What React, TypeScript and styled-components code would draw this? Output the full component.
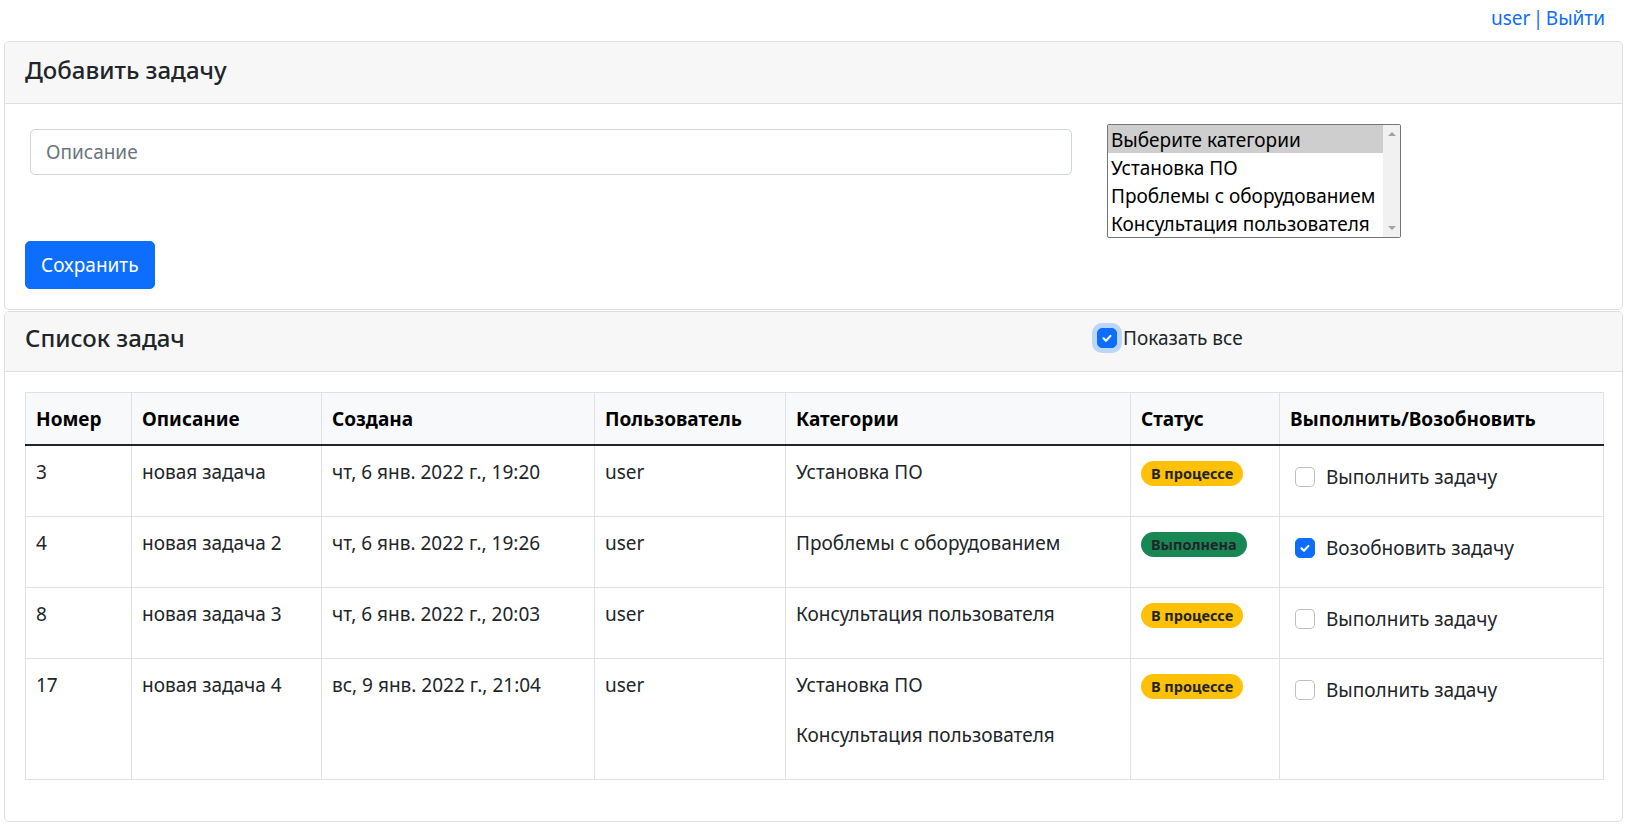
import React from "react";
import styled, { createGlobalStyle } from "styled-components";

const GlobalStyle = createGlobalStyle`
  html, body { margin: 0; padding: 0; background: #fff; }
  body {
    font-family: "Noto Sans", "Open Sans", sans-serif;
    font-size: 19px;
    line-height: 30px;
    color: #212529;
  }
  * { box-sizing: border-box; }
`;

const Page = styled.div`
  padding: 0 5px 0 4px;
`;

const TopBar = styled.div`
  height: 41px;
  display: flex;
  justify-content: flex-end;
  align-items: flex-start;
  gap: 2.5px;
  padding: 3px 18px 0 0;
  color: #0d6efd;
`;

const TopLink = styled.a`
  color: #0d6efd;
  text-decoration: none;
`;

const Card = styled.section<{ $gap?: number }>`
  border: 1px solid #dfdfdf;
  border-radius: 5px;
  background: #fff;
  margin-top: ${(p) => p.$gap ?? 0}px;
  overflow: hidden;
`;

const CardHeader = styled.div<{ $h: number; $lift: number }>`
  height: ${(p) => p.$h}px;
  display: flex;
  align-items: center;
  padding: 0 20px ${(p) => p.$lift}px 20px;
  background: #f7f7f7;
  border-bottom: 1px solid #dfdfdf;
`;

const Title = styled.h5`
  margin: 0;
  font-size: 24px;
  font-weight: 500;
  line-height: 30px;
  width: 1072px;
  flex: none;
`;

const CardBody = styled.div`
  padding: 20px;
`;

const FormRow = styled.div`
  display: flex;
  align-items: flex-start;
`;

const TextInput = styled.input`
  width: 1042px;
  height: 46px;
  margin: 5px 0 0 5px;
  padding: 0 15px;
  border: 1px solid #ced4da;
  border-radius: 5px;
  font: inherit;
  color: #212529;
  &::placeholder { color: #6c757d; }
`;

const ListBox = styled.div`
  margin-left: 35px;
  width: 294px;
  height: 114px;
  border: 1px solid #767676;
  border-radius: 2px;
  display: flex;
  background: #fff;
`;

const Options = styled.div`
  flex: 1;
  overflow: hidden;
`;

const Option = styled.div<{ $selected?: boolean }>`
  height: 28px;
  line-height: 30px;
  padding-left: 3px;
  white-space: nowrap;
  color: #000;
  background: ${(p) => (p.$selected ? "#cecece" : "transparent")};
`;

const ScrollTrack = styled.div`
  width: 17px;
  background: #f1f1f1;
  display: flex;
  flex-direction: column;
  justify-content: space-between;
  align-items: center;
  padding: 7px 0;
`;

const Arrow = styled.span<{ $down?: boolean }>`
  width: 0;
  height: 0;
  border-left: 4px solid transparent;
  border-right: 4px solid transparent;
  ${(p) =>
    p.$down
      ? "border-top: 4px solid #a3a3a3;"
      : "border-bottom: 4px solid #a3a3a3;"}
`;

const PrimaryButton = styled.button`
  margin-top: 3px;
  height: 48px;
  padding: 0 15px;
  border: 1px solid #0d6efd;
  border-radius: 5px;
  background: #0d6efd;
  color: #fff;
  font: inherit;
  cursor: pointer;
`;

const CheckLabel = styled.label<{ $gap?: number }>`
  display: flex;
  align-items: center;
  gap: ${(p) => p.$gap ?? 6}px;
  cursor: pointer;
`;

const CheckBox = styled.span<{ $checked?: boolean; $focus?: boolean }>`
  width: 20px;
  height: 20px;
  flex: none;
  border-radius: 5px;
  border: 1px solid ${(p) => (p.$checked ? "#0d6efd" : "rgba(0,0,0,.25)")};
  background: ${(p) => (p.$checked ? "#0d6efd" : "#fff")};
  box-shadow: ${(p) => (p.$focus ? "0 0 0 5px rgba(13,110,253,.25)" : "none")};
  display: inline-flex;
  align-items: center;
  justify-content: center;
`;

const Table = styled.table`
  width: 1578px;
  border-collapse: collapse;
  table-layout: fixed;
  border: 1px solid #dee2e6;
  margin-bottom: 21px;
`;

const Th = styled.th`
  padding: 11px 10px 9px;
  height: 52px;
  text-align: left;
  font-weight: 700;
  background: #f8f9fa;
  color: #000;
  border: 1px solid #dee2e6;
  border-bottom: 2px solid #212529;
  white-space: nowrap;
`;

const Td = styled.td`
  padding: 11px 10px 9px;
  vertical-align: top;
  border: 1px solid #dee2e6;
  white-space: nowrap;
`;

const Category = styled.p`
  margin: 0 0 20px 0;
`;

const Badge = styled.span<{ $tone: "warning" | "success" }>`
  display: inline-block;
  vertical-align: top;
  margin-top: 4px;
  height: 25px;
  line-height: 25px;
  padding: 0 10px;
  font-size: 14.5px;
  font-weight: 700;
  border-radius: 999px;
  color: #212529;
  background: ${(p) => (p.$tone === "success" ? "#198754" : "#ffc107")};
`;

const ActionCell = styled.div`
  margin: 5px 0 0 5px;
  height: 30px;
`;

const CheckMark = () => (
  <svg width="14" height="14" viewBox="0 0 20 20" fill="none">
    <path d="M5 10.5l3.5 3.5L15 7" stroke="#fff" strokeWidth="3" strokeLinecap="round" strokeLinejoin="round" />
  </svg>
);

type Task = {
  id: number;
  text: string;
  created: string;
  user: string;
  cats: string[];
  done: boolean;
};

const tasks: Task[] = [
  { id: 3, text: "новая задача", created: "чт, 6 янв. 2022 г., 19:20", user: "user", cats: ["Установка ПО"], done: false },
  { id: 4, text: "новая задача 2", created: "чт, 6 янв. 2022 г., 19:26", user: "user", cats: ["Проблемы с оборудованием"], done: true },
  { id: 8, text: "новая задача 3", created: "чт, 6 янв. 2022 г., 20:03", user: "user", cats: ["Консультация пользователя"], done: false },
  { id: 17, text: "новая задача 4", created: "вс, 9 янв. 2022 г., 21:04", user: "user", cats: ["Установка ПО", "Консультация пользователя"], done: false },
];

const columns = [
  { title: "Номер", w: 106 },
  { title: "Описание", w: 190 },
  { title: "Создана", w: 273 },
  { title: "Пользователь", w: 191 },
  { title: "Категории", w: 345 },
  { title: "Статус", w: 149 },
  { title: "Выполнить/Возобновить", w: 324 },
];

export default function App() {
  return (
    <>
      <GlobalStyle />
      <Page>
        <TopBar>
          <TopLink href="#">user</TopLink>
          <span>|</span>
          <TopLink href="#">Выйти</TopLink>
        </TopBar>

        <Card>
          <CardHeader $h={62} $lift={6}>
            <Title>Добавить задачу</Title>
          </CardHeader>
          <CardBody>
            <FormRow>
              <TextInput placeholder="Описание" />
              <ListBox>
                <Options>
                  <Option $selected>Выберите категории</Option>
                  <Option>Установка ПО</Option>
                  <Option>Проблемы с оборудованием</Option>
                  <Option>Консультация пользователя</Option>
                </Options>
                <ScrollTrack>
                  <Arrow />
                  <Arrow $down />
                </ScrollTrack>
              </ListBox>
            </FormRow>
            <PrimaryButton>Сохранить</PrimaryButton>
          </CardBody>
        </Card>

        <Card $gap={1}>
          <CardHeader $h={60} $lift={8}>
            <Title>Список задач</Title>
            <CheckLabel $gap={6}>
              <CheckBox $checked $focus>
                <CheckMark />
              </CheckBox>
              Показать все
            </CheckLabel>
          </CardHeader>
          <CardBody>
            <Table>
              <colgroup>
                {columns.map((c) => (
                  <col key={c.title} style={{ width: c.w }} />
                ))}
              </colgroup>
              <thead>
                <tr>
                  {columns.map((c) => (
                    <Th key={c.title}>{c.title}</Th>
                  ))}
                </tr>
              </thead>
              <tbody>
                {tasks.map((t) => (
                  <tr key={t.id}>
                    <Td>{t.id}</Td>
                    <Td>{t.text}</Td>
                    <Td>{t.created}</Td>
                    <Td>{t.user}</Td>
                    <Td>
                      {t.cats.map((c) => (
                        <Category key={c}>{c}</Category>
                      ))}
                    </Td>
                    <Td>
                      <Badge $tone={t.done ? "success" : "warning"}>
                        {t.done ? "Выполнена" : "В процессе"}
                      </Badge>
                    </Td>
                    <Td>
                      <ActionCell>
                        <CheckLabel $gap={11}>
                          <CheckBox $checked={t.done}>{t.done && <CheckMark />}</CheckBox>
                          {t.done ? "Возобновить задачу" : "Выполнить задачу"}
                        </CheckLabel>
                      </ActionCell>
                    </Td>
                  </tr>
                ))}
              </tbody>
            </Table>
          </CardBody>
        </Card>
      </Page>
    </>
  );
}
